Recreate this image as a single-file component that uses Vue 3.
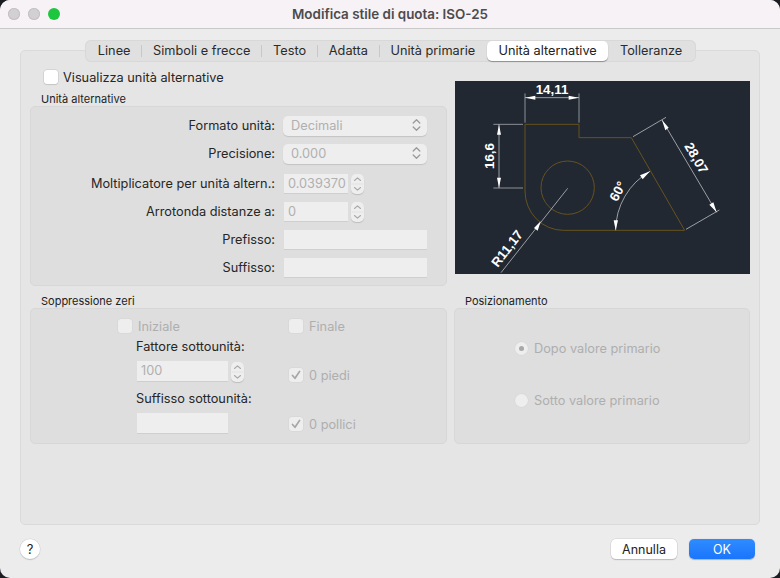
<script setup>
const tabs = ['Linee', 'Simboli e frecce', 'Testo', 'Adatta', 'Unità primarie', 'Unità alternative', 'Tolleranze']
const active = 'Unità alternative'
const rows = [
  { label: 'Formato unità:', kind: 'select', value: 'Decimali' },
  { label: 'Precisione:', kind: 'select', value: '0.000' },
  { label: 'Moltiplicatore per unità altern.:', kind: 'stepper', value: '0.039370' },
  { label: 'Arrotonda distanze a:', kind: 'stepper', value: '0' },
  { label: 'Prefisso:', kind: 'input', value: '' },
  { label: 'Suffisso:', kind: 'input', value: '' }
]
</script>

<template>
  <div class="window">
    <header class="titlebar">
      <div class="lights">
        <span class="light"></span><span class="light"></span><span class="light green"></span>
      </div>
      <div class="title">Modifica stile di quota: ISO-25</div>
    </header>

    <main class="panel">
      <nav class="tabs">
        <template v-for="(t, i) in tabs" :key="t">
          <span class="tab" :class="{ on: t === active }">{{ t }}</span>
          <i v-if="i < 4" class="sep"></i>
        </template>
      </nav>

      <div class="grid">
        <section class="left">
          <label class="main-check"><span class="box"></span>Visualizza unità alternative</label>
          <div class="legend">Unità alternative</div>
          <div class="group alt">
            <div v-for="r in rows" :key="r.label" class="row">
              <span class="lbl">{{ r.label }}</span>
              <div v-if="r.kind === 'select'" class="select">
                <span>{{ r.value }}</span>
                <svg width="9" height="14" viewBox="0 0 9 14" fill="none" stroke="#9a9a9a" stroke-width="1.3" stroke-linecap="round" stroke-linejoin="round"><path d="M1.2 5 4.5 1.8 7.8 5M1.2 9 4.5 12.2 7.8 9"/></svg>
              </div>
              <template v-else-if="r.kind === 'stepper'">
                <div class="field short">{{ r.value }}</div>
                <div class="stepper">
                  <svg width="13" height="20" viewBox="0 0 13 20" fill="none" stroke="#a8a8a8" stroke-width="1.1" stroke-linecap="round" stroke-linejoin="round"><path d="M3.5 6.5 6.5 3.8 9.5 6.5M3.5 13.5 6.5 16.2 9.5 13.5"/><path d="M1 10h11" stroke="#e2e2e2"/></svg>
                </div>
              </template>
              <div v-else class="field wide"></div>
            </div>
          </div>
        </section>

        <section class="preview">
          <svg class="drawing" viewBox="15 153 885 579" width="295" height="193">
            <g fill="none" stroke="#67521e" stroke-width="3">
              <path d="M225 283H387V323H544L704 601H340A115 118 0 0 1 225 483Z"/>
              <circle cx="353" cy="473" r="80"/>
            </g>
            <g fill="none" stroke="#8d9196" stroke-width="3">
              <path d="M225 190V278M387 190V278M130 283H219M130 474H219"/>
            </g>
            <g fill="none" stroke="#c9cbcd" stroke-width="2.2">
              <path d="M225 203H387M147 283V474"/>
              <path d="M549 320 648 262M708 598 808 540M636 270 800 547"/>
              <path d="M600 424A205 205 0 0 0 497 601"/>
              <path d="M353 475 153 728"/>
            </g>
            <g fill="#fff">
              <path d="M226 203 256 197V209ZM386 203 356 197V209Z"/>
              <path d="M147 284 141 314H153ZM147 473 141 443H153Z"/>
              <path d="M636 270 646 301 656 293ZM800 547 778 524 790 517Z"/>
              <path d="M600 424 570 436 578 448ZM497 601 491 571 504 571Z"/>
              <path d="M272 574 252 594 263 602Z"/>
            </g>
            <g class="dim">
              <text x="306" y="193">14,11</text>
              <text transform="translate(133 378) rotate(-90)">16,6</text>
              <text transform="translate(727 391) rotate(60)">28,07</text>
              <text transform="translate(515 490) rotate(-62)">60°</text>
              <text transform="translate(182 664) rotate(-52)">R11,17</text>
            </g>
          </svg>
        </section>

        <section>
          <div class="legend">Soppressione zeri</div>
          <div class="group zeri">
            <div class="zeri-col first">
              <label class="chk off"><span class="box"></span>Iniziale</label>
              <div class="cap">Fattore sottounità:</div>
              <div class="inline">
                <div class="field sub">100</div>
                <div class="stepper">
                  <svg width="13" height="20" viewBox="0 0 13 20" fill="none" stroke="#a8a8a8" stroke-width="1.1" stroke-linecap="round" stroke-linejoin="round"><path d="M3.5 6.5 6.5 3.8 9.5 6.5M3.5 13.5 6.5 16.2 9.5 13.5"/><path d="M1 10h11" stroke="#e2e2e2"/></svg>
                </div>
              </div>
              <div class="cap">Suffisso sottounità:</div>
              <div class="field sub"></div>
            </div>
            <div class="zeri-col second">
              <label class="chk off"><span class="box"></span>Finale</label>
              <label class="chk off feet"><span class="box"><svg width="10" height="10" viewBox="0 0 10 10" fill="none" stroke="#a6a6a6" stroke-width="1.7" stroke-linecap="round" stroke-linejoin="round"><path d="M1.5 5.5 4 8.3 8.6 1.4"/></svg></span>0 piedi</label>
              <label class="chk off inch"><span class="box"><svg width="10" height="10" viewBox="0 0 10 10" fill="none" stroke="#a6a6a6" stroke-width="1.7" stroke-linecap="round" stroke-linejoin="round"><path d="M1.5 5.5 4 8.3 8.6 1.4"/></svg></span>0 pollici</label>
            </div>
          </div>
        </section>

        <section>
          <div class="legend">Posizionamento</div>
          <div class="group posiz">
            <label class="radio"><span class="dot on"></span>Dopo valore primario</label>
            <label class="radio"><span class="dot"></span>Sotto valore primario</label>
          </div>
        </section>
      </div>
    </main>

    <footer class="footer">
      <button class="help">?</button>
      <div class="actions">
        <button class="btn">Annulla</button>
        <button class="btn ok">OK</button>
      </div>
    </footer>
  </div>
</template>

<style>
html, body { margin: 0; background: #1b1d22; }
</style>

<style scoped>
.window {
  width: 780px; height: 578px; box-sizing: border-box; overflow: hidden;
  display: flex; flex-direction: column;
  background: #ececec; border-radius: 10px;
  font-family: Inter, "Liberation Sans", sans-serif; font-size: 12.75px; color: #262626;
}
.titlebar {
  height: 28px; flex: none; position: relative;
  display: flex; align-items: center; justify-content: center;
  background: #f7f2f6; border-bottom: 1px solid #c9c9c9;
}
.lights { position: absolute; left: 8px; top: 8px; display: flex; gap: 8px; }
.light { width: 12px; height: 12px; border-radius: 50%; background: #d3d0d3; box-shadow: inset 0 0 0 1px #c3c0c3; }
.light.green { background: #1ec63f; box-shadow: none; }
.title { font-weight: 600; font-size: 13.4px; color: #4d4b4d; }
.panel {
  margin: 21px 20px 0; height: 475px; box-sizing: border-box; flex: none; position: relative;
  background: #e5e5e5; border: 1px solid #dadada; border-radius: 5px;
}
.tabs {
  position: absolute; left: 64px; top: -11px; height: 22px; box-sizing: border-box; width: 611px;
  display: flex; align-items: center; padding: 0 0 0 2px;
  background: #e0e0e0; border-radius: 6px; box-shadow: 0 0 0 1px #d8d8d8 inset;
}
.tab { padding: 0 10.8px; line-height: 20px; white-space: nowrap; color: #2b2b2b; }
.tab.on { background: #fff; border-radius: 5px; box-shadow: 0 1px 1px rgba(0,0,0,.35); margin: 0 1px; padding: 0 11.4px; color: #222; }
.sep { width: 1px; height: 12px; background: #c8c8c8; }
.grid {
  display: grid; grid-template-columns: 417px 296px; column-gap: 7px;
  grid-template-rows: 216px 143px; padding: 19px 0 0 9px; align-content: start;
}
.left { display: flex; flex-direction: column; }
.main-check { display: flex; align-items: center; height: 14px; margin-left: 14px; gap: 5px; }
.box {
  width: 14px; height: 14px; box-sizing: border-box; flex: none; border-radius: 3px; background: #fff;
  display: flex; align-items: center; justify-content: center;
  box-shadow: 0 0 0 .5px #c4c4c4, 0 1px 1px rgba(0,0,0,.12);
}
.legend { font-size: 11px; line-height: 14px; margin: 8px 0 0 11px; color: #222; }
.group { background: #dedede; border: 1px solid #d7d7d7; border-radius: 5px; box-sizing: border-box; }
.alt { height: 180px; padding-top: 9px; display: flex; flex-direction: column; }
.row { display: flex; align-items: center; height: 20px; margin-bottom: 8px; flex: none; }
.row:nth-child(2) { margin-bottom: 10px; }
.lbl { width: 244px; flex: none; text-align: right; box-sizing: border-box; white-space: nowrap; padding-bottom: 2px; }
.select {
  width: 144px; height: 20px; margin-left: 8px; box-sizing: border-box; padding: 0 6px 2px 8px;
  display: flex; align-items: center; justify-content: space-between;
  background: #eeeeee; border-radius: 5px; box-shadow: 0 1px 1px rgba(0,0,0,.12);
  color: #b0b0b0;
}
.field {
  height: 20px; box-sizing: border-box; background: #eeeeee; border-bottom: 1px solid #cfcfcf;
  color: #b0b0b0; padding-left: 4px; line-height: 19px;
}
.short { width: 64px; margin-left: 9px; }
.wide { width: 143px; margin-left: 9px; }
.sub { width: 91px; height: 21px; line-height: 20px; }
.stepper {
  width: 13px; height: 20px; margin-left: 3px; background: #eeeeee; border-radius: 5px;
  box-shadow: 0 1px 1px rgba(0,0,0,.15);
}
.stepper svg { display: block; }
.preview { padding-top: 11px; margin-left: 1px; }
.drawing { display: block; background: #212831; }
.dim text {
  fill: #fff; font-family: "Liberation Sans", Arial, sans-serif; font-weight: 700; font-size: 40px; text-anchor: middle;
}
.zeri { height: 136px; display: flex; position: relative; }
.zeri-col.first { margin-left: 87px; width: 171px; display: flex; flex-direction: column; }
.zeri-col.first .cap { margin-left: 18px; line-height: 16px; margin-top: 4px; }
.zeri-col.first .inline { display: flex; margin: 6px 0 0 19px; align-items: center; }
.zeri-col.first .cap + .field { margin: 6px 0 0 19px; }
.zeri-col.first .inline + .cap { margin-top: 9px; }
.chk { display: flex; align-items: center; gap: 6px; height: 18px; margin-top: 8px; color: #aeaeae; }
.off .box { background: #eeeeee; box-shadow: 0 0 0 .5px #d4d4d4; }
.second { display: flex; flex-direction: column; }
.feet { margin-top: 31px; }
.inch { margin-top: 31px; }
.posiz { height: 136px; width: 296px; padding: 30px 0 0 60px; display: flex; flex-direction: column; gap: 34px; }
.radio { display: flex; align-items: center; gap: 6px; height: 18px; color: #aeaeae; }
.dot {
  width: 13px; height: 13px; border-radius: 50%; background: #eeeeee; box-shadow: 0 0 0 .5px #d6d6d6;
  display: flex; align-items: center; justify-content: center;
}
.dot.on::after { content: ""; width: 5px; height: 5px; border-radius: 50%; background: #a8a8a8; }
.footer {
  flex: 1; display: flex; align-items: flex-start; justify-content: space-between; padding: 14px 25px 0 20px;
}
.help {
  width: 20px; height: 20px; padding: 0; border: 0; border-radius: 50%; background: #fff;
  box-shadow: 0 0 0 .5px #d0d0d0, 0 1px 1px rgba(0,0,0,.25);
  font: 400 13px Inter, "Liberation Sans", sans-serif; color: #222;
}
.actions { display: flex; gap: 12px; }
.btn {
  width: 66px; height: 20px; padding: 0; border: 0; border-radius: 5px; background: #fff;
  box-shadow: 0 0 0 .5px #d0d0d0, 0 1px 1px rgba(0,0,0,.3);
  font: 12.5px Inter, "Liberation Sans", sans-serif; color: #222;
}
.btn.ok { background: linear-gradient(#2f8cff, #1a75fb); color: #fff; box-shadow: 0 .5px 1px rgba(0,0,0,.25); }
</style>
